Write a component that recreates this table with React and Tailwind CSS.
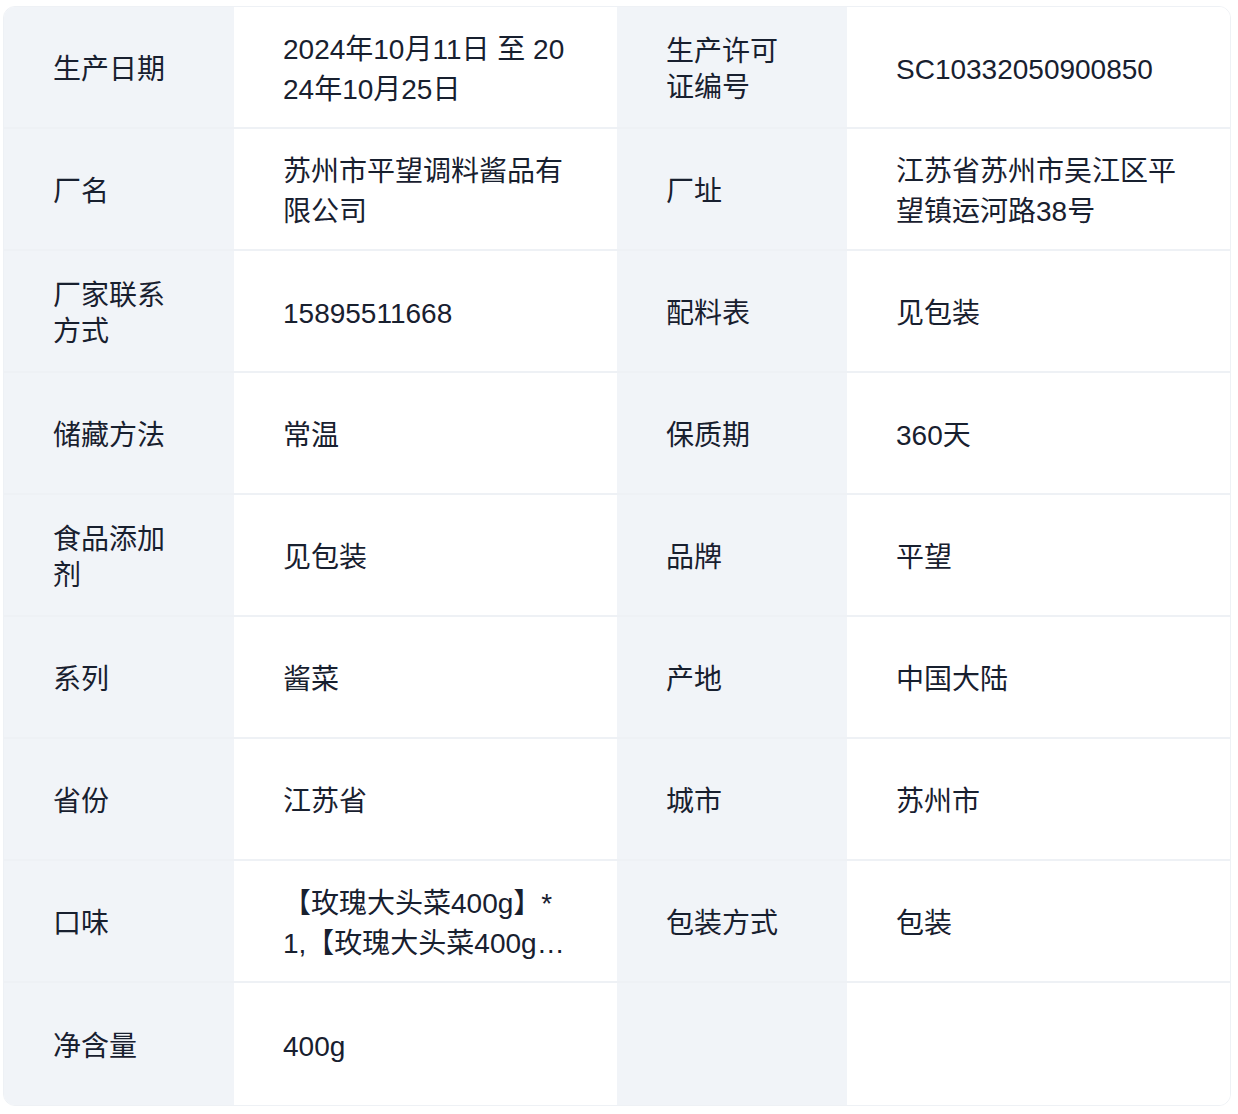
const ROWS = [
  ['生产日期', '2024年10月11日 至 2024年10月25日', '生产许可证编号', 'SC10332050900850'],
  ['厂名', '苏州市平望调料酱品有限公司', '厂址', '江苏省苏州市吴江区平望镇运河路38号'],
  ['厂家联系方式', '15895511668', '配料表', '见包装'],
  ['储藏方法', '常温', '保质期', '360天'],
  ['食品添加剂', '见包装', '品牌', '平望'],
  ['系列', '酱菜', '产地', '中国大陆'],
  ['省份', '江苏省', '城市', '苏州市'],
  ['口味', '【玫瑰大头菜400g】*1,【玫瑰大头菜400g】*2', '包装方式', '包装'],
  ['净含量', '400g', '', ''],
];

function Cell({ label, value, last }) {
  return (
    <div className={`flex h-[122px] ${last ? '' : 'border-b-2 border-[#eef1f5]'}`}>
      <div className="w-[230px] shrink-0 bg-[#f1f4f8] pl-[49px] pr-[48px] pt-[6px] flex items-center">
        <p className="text-[28px] leading-[36px] break-all">{label}</p>
      </div>
      <div className="flex-1 min-w-0 bg-white px-[49px] pt-[6px] flex items-center">
        <p className="text-[28px] leading-[40px] break-all line-clamp-2">{value}</p>
      </div>
    </div>
  );
}

export default function App() {
  return (
    <div
      className="min-h-screen bg-white pt-[6px] pl-[3px] text-[#18202f]"
      style={{ fontFamily: '"Liberation Sans", "Noto Sans CJK SC", sans-serif' }}
    >
      <div className="w-[1228px] rounded-xl border border-[#eef1f5] overflow-hidden grid grid-cols-2">
        {ROWS.map(([l1, v1, l2, v2], i) => (
          <div key={i} className="contents">
            <Cell label={l1} value={v1} last={i === ROWS.length - 1} />
            <Cell label={l2} value={v2} last={i === ROWS.length - 1} />
          </div>
        ))}
      </div>
    </div>
  );
}
